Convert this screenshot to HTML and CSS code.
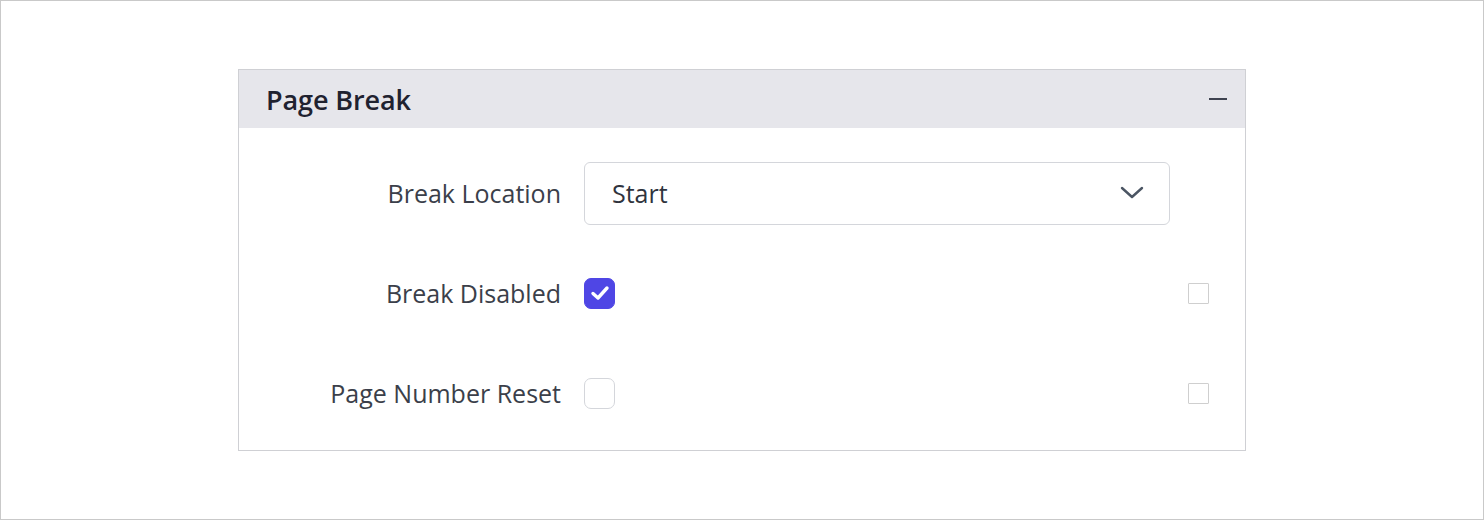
FILE: index.html
```html
<!DOCTYPE html>
<html lang="en">
<head>
  <meta charset="UTF-8" />
  <title>Page Break</title>
  <link rel="stylesheet" href="styles.css">
</head>
<body>
  <div class="frame">
    <div class="panel">
      <div class="panel-header">
        <span class="panel-title">Page Break</span>
        <span class="collapse-icon"></span>
      </div>
      <div class="panel-body">
        <div class="row">
          <label class="row-label">Break Location</label>
          <div class="dropdown">
            <span>Start</span>
            <svg width="24" height="14" viewBox="0 0 24 14"><path d="M2 2 L12 11 L22 2" fill="none" stroke="#4b5563" stroke-width="2.4" stroke-linecap="round" stroke-linejoin="round"/></svg>
          </div>
          <span class="mini-box"></span>
        </div>
        <div class="row">
          <label class="row-label">Break Disabled</label>
          <span class="checkbox checked">
            <svg width="20" height="16" viewBox="0 0 20 16"><path d="M3 8.5 L8 13 L17 3" fill="none" stroke="#fff" stroke-width="3.4" stroke-linecap="round" stroke-linejoin="round"/></svg>
          </span>
          <span class="mini-box"></span>
        </div>
        <div class="row">
          <label class="row-label">Page Number Reset</label>
          <span class="checkbox"></span>
          <span class="mini-box"></span>
        </div>
      </div>
    </div>
  </div>
</body>
</html>
```

FILE: styles.css
```css
html, body {
  margin: 0;
  padding: 0;
  background: white;
  font-family: "Open Sans", "Noto Sans", sans-serif;
}
.frame {
  width: 1484px;
  height: 520px;
  box-sizing: border-box;
  border: 1px solid #c9c9c9;
  padding: 68px 0 0 237px;
}
.panel {
  width: 1008px;
  box-sizing: border-box;
  border: 1px solid #cfd0d4;
}
.panel-header {
  height: 58px;
  background: #e6e6eb;
  display: flex;
  align-items: center;
  justify-content: space-between;
  padding: 0 18px 0 27px;
}
.panel-title {
  font-size: 27px;
  font-weight: 600;
  color: #1f2230;
  letter-spacing: -0.1px;
}
.collapse-icon {
  width: 18px;
  height: 2px;
  background: #3f4350;
}
.panel-body {
  padding: 15px 0 7px 0;
}
.row {
  height: 100px;
  display: grid;
  grid-template-columns: 322px 609px 1fr;
  align-items: center;
}
.row-label {
  text-align: right;
  font-size: 25px;
  color: #3b3f4a;
}
.row > :nth-child(2) {
  margin-left: 23px;
}
.dropdown {
  height: 63px;
  box-sizing: border-box;
  border: 1px solid #d4d6db;
  border-radius: 6px;
  display: flex;
  align-items: center;
  justify-content: space-between;
  padding: 0 25px 0 27px;
  font-size: 25px;
  color: #2f333d;
}
.checkbox {
  width: 31px;
  height: 31px;
  box-sizing: border-box;
  border: 1px solid #d4d6db;
  border-radius: 7px;
  display: flex;
  align-items: center;
  justify-content: center;
}
.checkbox.checked {
  background: #4f46e5;
  border-color: #4f46e5;
}
.mini-box {
  justify-self: end;
  margin-right: 36px;
  width: 21px;
  height: 21px;
  box-sizing: border-box;
  border: 1px solid #cfcfcf;
  border-radius: 1px;
}
.row:first-child .mini-box {
  visibility: hidden;
}
```
